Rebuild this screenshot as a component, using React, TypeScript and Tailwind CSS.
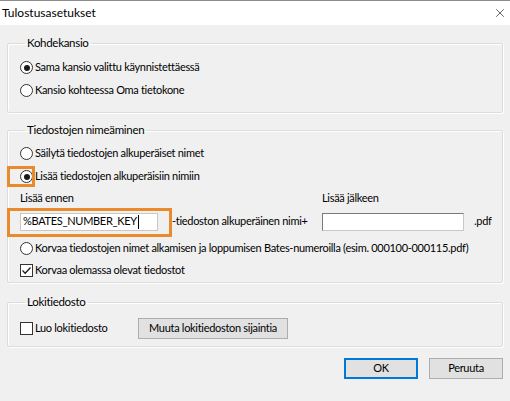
import { X } from "lucide-react";

function Radio({ checked = false }: { checked?: boolean }) {
  return (
    <span className="flex h-[13px] w-[13px] shrink-0 items-center justify-center rounded-full border border-[#333] bg-white">
      {checked && <span className="h-[6px] w-[6px] rounded-full bg-[#1a1a1a]" />}
    </span>
  );
}

function Check({ checked = false }: { checked?: boolean }) {
  return (
    <span className="flex h-[13px] w-[13px] shrink-0 items-center justify-center border border-[#333] bg-white">
      {checked && (
        <svg width="11" height="11" viewBox="0 0 11 11">
          <path d="M1.5 5.5 L4.2 8.2 L9.5 2.5" fill="none" stroke="#1a1a1a" strokeWidth="1.3" />
        </svg>
      )}
    </span>
  );
}

function Group({ title, children }: { title: string; children: React.ReactNode }) {
  return (
    <fieldset className="rounded-[2px] border border-[#dcdcdc] pl-[12px] pr-[8px] shadow-[inset_1px_1px_0_#fff,1px_1px_0_#fff]">
      <legend className="ml-[5px] px-[2px] text-[11.5px] leading-[16px]">{title}</legend>
      {children}
    </fieldset>
  );
}

export default function App() {
  return (
    <div
      className="h-[401px] w-[510px] overflow-hidden whitespace-nowrap border-t border-[#8c8c8c] bg-[#f0f0f0] text-[11px] tracking-[-0.3px] text-black"
      style={{ fontFamily: "Lato, 'Noto Sans', sans-serif" }}
    >
      {/* title bar */}
      <div className="flex h-[24px] items-center justify-between bg-white pl-[2px] pr-[3px] text-[12px] tracking-normal">
        <span>Tulostusasetukset</span>
        <X size={14} strokeWidth={1.2} className="text-[#222]" />
      </div>

      <div className="px-[7px] pt-[10px]">
        <Group title="Kohdekansio">
          <div className="pt-[5px] pb-[10px]">
            <label className="flex h-[23px] items-center gap-[2px]">
              <Radio checked />
              Sama kansio valittu käynnistettäessä
            </label>
            <label className="flex h-[23px] items-center gap-[2px]">
              <Radio />
              Kansio kohteessa Oma tietokone
            </label>
          </div>
        </Group>

        <div className="h-[9px]" />

        <Group title="Tiedostojen nimeäminen">
          <div className="pt-[4px]">
            <label className="flex h-[23px] items-center gap-[2px]">
              <Radio />
              Säilytä tiedostojen alkuperäiset nimet
            </label>
            <label className="relative flex h-[23px] items-center gap-[2px]">
              <Radio checked />
              Lisää tiedostojen alkuperäisiin nimiin
              {/* highlight frame */}
              <span className="absolute left-[-13px] top-[1px] h-[21px] w-[28px] border-[3px] border-[#e98a2c]" />
            </label>
            <div className="flex h-[18px] items-end">
              <span className="w-[302px]">Lisää ennen</span>
              <span>Lisää jälkeen</span>
            </div>
            <div className="relative flex h-[31px] items-center">
              <div className="flex h-[18px] w-[138px] items-center border border-[#c8c8c8] bg-white pl-[2px]">
                %BATES_NUMBER_KEY<span className="ml-[1px] h-[14px] w-[1px] bg-black" />
              </div>
              <span className="ml-[14px] w-[150px]">-tiedoston alkuperäinen nimi+</span>
              <div className="h-[18px] w-[142px] border border-[#7a7a7a] border-b-[#c8c8c8] border-r-[#c8c8c8] bg-white" />
              <span className="ml-[10px]">.pdf</span>
              {/* highlight frame */}
              <span className="absolute left-[-13px] top-[2px] h-[29px] w-[165px] border-[3px] border-[#e98a2c]" />
            </div>
            <label className="flex h-[22px] items-center gap-[2px]">
              <Radio />
              Korvaa tiedostojen nimet alkamisen ja loppumisen Bates-numeroilla (esim. 000100-000115.pdf)
            </label>
            <label className="flex h-[23px] items-center gap-[2px]">
              <Check checked />
              Korvaa olemassa olevat tiedostot
            </label>
          </div>
        </Group>

        <div className="h-[11px]" />

        <Group title="Lokitiedosto">
          <div className="flex items-center pt-[8px] pb-[7px]">
            <label className="flex w-[118px] items-center gap-[2px]">
              <Check />
              Luo lokitiedosto
            </label>
            <button className="h-[21px] w-[150px] border border-[#adadad] bg-[#e1e1e1]">
              Muuta lokitiedoston sijaintia
            </button>
          </div>
        </Group>

        <div className="mt-[11px] flex justify-end gap-[11px]">
          <button className="h-[21px] w-[74px] border-2 border-[#0078d7] bg-[#e1e1e1]">OK</button>
          <button className="h-[21px] w-[74px] border border-[#adadad] bg-[#e1e1e1]">Peruuta</button>
        </div>
      </div>
    </div>
  );
}
